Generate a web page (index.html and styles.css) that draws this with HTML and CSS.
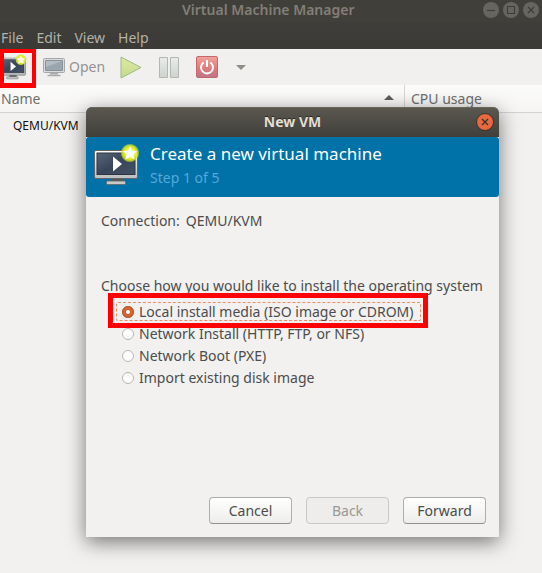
FILE: index.html
```html
<!DOCTYPE html>
<html lang="en">
<head>
<meta charset="utf-8">
<title>Virtual Machine Manager</title>
<link rel="stylesheet" href="styles.css">
</head>
<body>
<svg class="defs" width="0" height="0" aria-hidden="true">
  <defs>
    <linearGradient id="screen" x1="0" y1="0" x2="1" y2="1"><stop offset="0" stop-color="#59667a"/><stop offset=".5" stop-color="#39465a"/><stop offset="1" stop-color="#445166"/></linearGradient>
    <linearGradient id="bezel" x1="0" y1="0" x2="0" y2="1"><stop offset="0" stop-color="#fff"/><stop offset="1" stop-color="#bdbdbd"/></linearGradient>
    <linearGradient id="pale" x1="0" y1="0" x2="0" y2="1"><stop offset="0" stop-color="#e9ece9"/><stop offset="1" stop-color="#ced3ce"/></linearGradient>
    <linearGradient id="green" x1="0" y1="0" x2="0" y2="1"><stop offset="0" stop-color="#dfe9a5"/><stop offset="1" stop-color="#c4da8c"/></linearGradient>
    <linearGradient id="red" x1="0" y1="0" x2="0" y2="1"><stop offset="0" stop-color="#f0a59b"/><stop offset=".6" stop-color="#e0777a"/><stop offset="1" stop-color="#b9768b"/></linearGradient>
    <radialGradient id="glow"><stop offset="0" stop-color="#ffff60"/><stop offset=".6" stop-color="#e9ee20"/><stop offset=".85" stop-color="#dce821" stop-opacity=".75"/><stop offset="1" stop-color="#dce821" stop-opacity="0"/></radialGradient>
    <symbol id="new-vm" viewBox="0 0 46 42">
      <path d="M17 34h12v4H17z" fill="#555"/>
      <rect x="12.500" y="37" width="19" height="3.500" rx="1" fill="#c9c9c9" stroke="#666" stroke-width=".8"/>
      <rect x=".5" y="6.500" width="43" height="28" rx="1.500" fill="url(#bezel)" stroke="#62666c"/>
      <rect x="3" y="9" width="38" height="21.500" fill="url(#screen)" stroke="#2c3542"/>
      <path d="M19 12.500v15l9-7.500z" fill="#fff"/>
      <circle cx="36" cy="9" r="9.500" fill="url(#glow)"/>
      <path d="M36 2l2 4.500 5 .5-3.500 3.500 1 5-4.500-2.500-4.500 2.500 1-5L29 7l5-.5z" fill="#fff"/>
    </symbol>
  </defs>
</svg>
<div class="window">
  <header class="titlebar">
    <span class="window-title t-title">Virtual Machine Manager</span>
    <div class="controls">
      <svg viewBox="0 0 16 16"><circle cx="8" cy="8" r="8"/><path d="M4 8.500h8"/></svg>
      <svg viewBox="0 0 16 16"><circle cx="8" cy="8" r="8"/><path d="M4.500 4.500h7v7h-7z"/></svg>
      <svg viewBox="0 0 16 16"><circle cx="8" cy="8" r="8"/><path d="M5 5l6 6M11 5l-6 6"/></svg>
    </div>
  </header>
  <nav class="menubar"><span>File</span><span>Edit</span><span>View</span><span>Help</span></nav>
  <div class="toolbar">
    <svg class="tool-new"><use href="#new-vm"/></svg>
    <svg class="tool-open" viewBox="0 0 22 20"><rect x=".5" y="1.500" width="21" height="14" rx="1" fill="#dadada" stroke="#a4a6a8"/><path d="M2.500 3.500h17v10h-17z" fill="#9ba5ae" stroke="#89929a"/><path d="M3 4h16L3 10z" fill="#b4bcc3"/><path d="M7 15.500h8v2H7z" fill="#aaa"/><path d="M4.500 18.500h13" stroke="#a9a9a9" stroke-width="1.500"/></svg>
    <span class="open-label">Open</span>
    <svg class="tool-run" viewBox="0 0 22 23"><path d="M1 1l20 10.500L1 22z" fill="url(#green)" stroke="#9cbc80"/></svg>
    <svg class="tool-pause" viewBox="0 0 20 21"><path d="M.5.500h8v20h-8zM11.500.500h8v20h-8z" fill="url(#pale)" stroke="#b3b7b3"/></svg>
    <svg class="tool-power" viewBox="0 0 22 22"><rect x=".5" y=".5" width="21" height="21" rx="1.500" fill="url(#red)" stroke="#c66769"/><path d="M7.700 6.500a6 6 0 1 0 6.600 0M11 4v7" fill="none" stroke="#fff" stroke-width="2"/></svg>
    <svg class="tool-more" viewBox="0 0 10 5"><path d="M0 0h10L5 5z" fill="#8f8f88"/></svg>
  </div>
  <div class="columns">
    <div class="col name-col"><span class="t-name">Name</span><svg viewBox="0 0 10 5"><path d="M0 5h10L5 0z" fill="#5c5c58"/></svg></div>
    <div class="col"><span class="t-cpu">CPU usage</span></div>
  </div>
  <div class="host-row"><span class="t-host">QEMU/KVM</span></div>
</div>

<section class="dialog">
  <header class="dialog-bar"><span class="t-newvm">New VM</span>
    <svg class="dialog-close" viewBox="0 0 18 18"><circle cx="9" cy="9" r="8.500"/><path d="M6 6l6 6M12 6l-6 6"/></svg>
  </header>
  <div class="banner">
    <svg class="banner-icon"><use href="#new-vm"/></svg>
    <div class="banner-text"><h1><span class="t-create">Create a new virtual machine</span></h1><p><span class="t-step">Step 1 of 5</span></p></div>
  </div>
  <div class="content">
    <div class="connection"><span class="t-conn">Connection:</span><span class="t-kvm">QEMU/KVM</span></div>
    <p class="prompt"><span class="t-choose">Choose how you would like to install the operating system</span></p>
    <div class="options">
      <div class="option selected"><i class="radio"></i><span class="t-local">Local install media (ISO image or CDROM)</span></div>
      <div class="option"><i class="radio"></i><span class="t-net">Network Install (HTTP, FTP, or NFS)</span></div>
      <div class="option"><i class="radio"></i><span class="t-pxe">Network Boot (PXE)</span></div>
      <div class="option"><i class="radio"></i><span class="t-import">Import existing disk image</span></div>
    </div>
    <footer class="buttons"><div class="button">Cancel</div><div class="button disabled">Back</div><div class="button">Forward</div></footer>
  </div>
</section>
<div class="mark mark-tool"></div>
<div class="mark mark-option"></div>
</body>
</html>
```
FILE: styles.css
```css
* { box-sizing: border-box; }
body { margin: 0; width: 542px; height: 573px; overflow: hidden; position: relative; background: #f2f1f0; color: #4c4c4c; font: 14px/20px "Noto Sans", "Open Sans", sans-serif; white-space: nowrap; }
h1, p { margin: 0; font-weight: 400; }
svg { display: block; flex: none; }
.defs { position: absolute; }
.titlebar { height: 22px; background: #403f3a; display: flex; justify-content: flex-end; align-items: flex-start; }
.window-title { width: 179px; margin: 0 122px 0 0; color: #827f78; font-weight: 600; }
.controls { display: flex; gap: 4px; padding: 2px 3px 0 0; }
.controls svg { width: 16px; height: 16px; fill: #666560; }
.controls path { fill: none; stroke: #3d3c37; stroke-width: 1.1; }
.menubar { height: 27px; background: linear-gradient(#3e3d39, #3b3a36); display: flex; gap: 13px; padding: 6px 0 0 1px; color: #b3b1a9; }
.toolbar { height: 36px; display: flex; align-items: center; background: #f1f0ef; }
.tool-new { width: 28px; height: 26px; margin-left: -1px; }
.tool-open { width: 22px; height: 20px; margin-left: 16px; }
.open-label { margin-left: 4px; width: 36px; color: #949390; }
.tool-run { width: 22px; height: 23px; margin-left: 15px; }
.tool-pause { width: 20px; height: 21px; margin-left: 17px; }
.tool-power { width: 22px; height: 22px; margin-left: 17px; }
.tool-more { width: 10px; height: 5px; margin-left: 18px; }
.columns { height: 28px; display: grid; grid-template-columns: 405px 1fr; background: linear-gradient(#fbfbfa, #f6f5f4); border-bottom: 1px solid #d3d2d0; color: #6f6e6b; }
.col { padding: 4px 0 0 6px; }
.name-col { display: flex; justify-content: space-between; padding: 4px 10px 0 1px; border-right: 1px solid #d6d5d3; }
.name-col svg { width: 10px; height: 5px; margin-top: 6px; }
.host-row { padding: 3px 0 0 13px; color: #111; font-size: 12px; }
.dialog { position: absolute; left: 86px; top: 107px; width: 413px; height: 430px; display: flex; flex-direction: column; border-radius: 6px 6px 0 0; background: #f2f1f0; box-shadow: 0 5px 20px rgba(0,0,0,.52); }
.dialog-bar { height: 30px; flex: none; display: grid; grid-template-columns: 1fr 18px; align-items: center; padding: 0 5px 0 23px; border-radius: 6px 6px 0 0; background: linear-gradient(#5b5850, #403f3a); color: #e3dfd5; font-weight: 700; text-align: center; text-shadow: 0 -1px #282722; box-shadow: inset 0 1px #68655c; }
.dialog-close { width: 18px; height: 18px; fill: #e9683d; stroke: #36342e; }
.dialog-close path { stroke-width: 1.3; }
.banner { height: 60px; flex: none; display: flex; padding: 7px 0 0 8px; background: #0072a8; border-radius: 3px; color: #fff; }
.banner-icon { width: 46px; height: 42px; }
.banner-text { margin-left: 10px; }
h1 { font-size: 17px; line-height: 20px; }
.banner p { margin-top: 4px; color: #55a9dc; }
.content { flex: 1; display: flex; flex-direction: column; padding: 14px 13px 13px 15px; }
.connection { display: flex; gap: 6px; }
.prompt { margin-top: 45px; }
.options { margin: 4px 0 0 15px; }
.option { height: 22px; display: flex; align-items: center; padding-left: 6px; }
.selected { width: 305px; height: 19px; margin: 2px 0 2px; padding-left: 5px; border: 1px dashed #ee8f65; border-radius: 2px; }
.radio { width: 12px; height: 12px; margin-right: 5px; border: 1px solid #b8b6b2; border-radius: 50%; background: #fff; flex: none; }
.selected .radio { border: 4px solid #d9622f; outline: 1px solid #a85b3e; outline-offset: -1px; }
.buttons { display: flex; justify-content: flex-end; gap: 14px; margin-top: auto; }
.button { width: 83px; height: 27px; border: 1px solid #b0aeaa; border-bottom-color: #92908c; border-radius: 4px; background: linear-gradient(#fff, #ededeb); line-height: 25px; text-align: center; }
.disabled { background: #eeedeb; border-color: #c9c8c5; color: #999894; }
.mark { position: absolute; border: 4px solid #f00; }
.mark-tool { left: 0; top: 49px; width: 36px; height: 39px; border-bottom-width: 5px; }
.mark-option { left: 108px; top: 293px; width: 320px; height: 35px; border-width: 5px; }
```
